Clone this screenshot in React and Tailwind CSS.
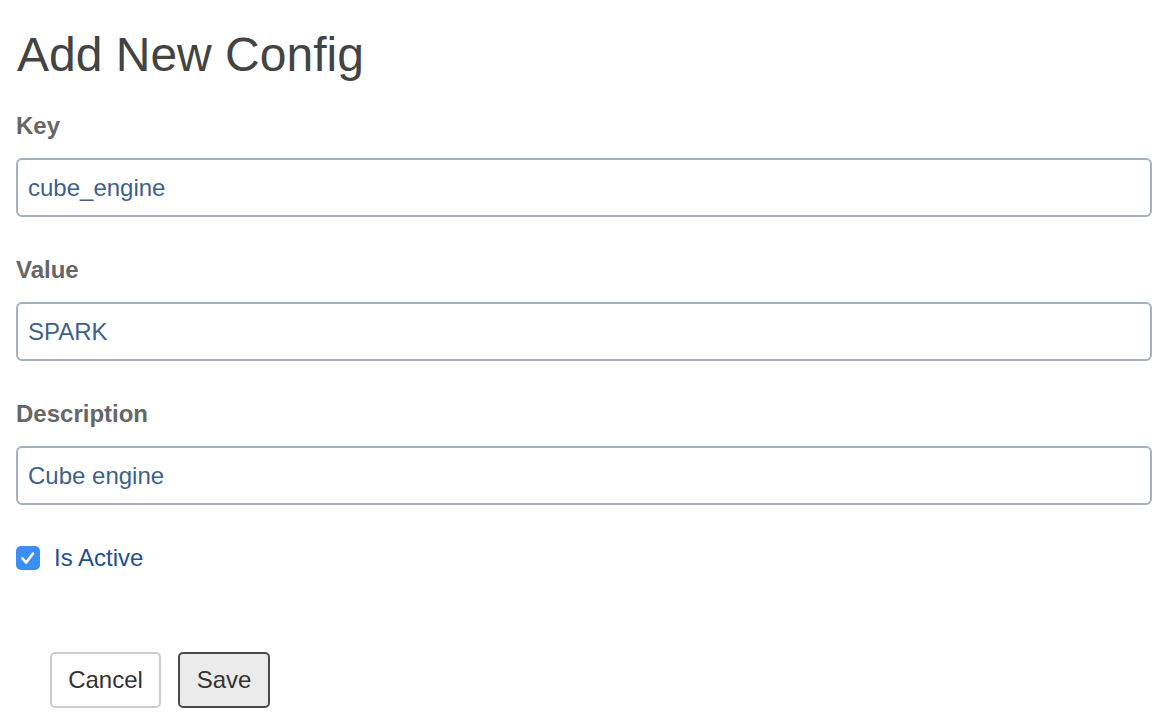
import React from "react";

function Field({ label, value }) {
  return (
    <div className="flex flex-col">
      <label className="text-[24px] leading-[28px] font-bold text-[#666666] -mt-[2px] mb-[2px]">{label}</label>
      <div className="mt-[16px] h-[59px] flex items-center rounded-[6px] border-2 border-[#a3b1c2] bg-white px-[10px]">
        <span className="text-[24px] leading-[28px] text-[#3d5f8c]">{value}</span>
      </div>
    </div>
  );
}

export default function App() {
  return (
    <div
      className="w-[1172px] h-[728px] bg-white pl-[16px] pr-[20px] pt-[28px]"
      style={{ fontFamily: '"Liberation Sans", Arial, Helvetica, sans-serif' }}
    >
      <h1 className="text-[48px] leading-[53px] text-[#434343] pl-[1px]">Add New Config</h1>
      <div className="mt-[33px] flex flex-col gap-[41px]">
        <Field label="Key" value="cube_engine" />
        <Field label="Value" value="SPARK" />
        <Field label="Description" value="Cube engine" />
      </div>
      <div className="mt-[41px] flex items-center h-[24px]">
        <span className="w-[24px] h-[24px] rounded-[5px] bg-[#3b8ef4] flex items-center justify-center">
          <svg width="20" height="20" viewBox="0 0 20 20" fill="none">
            <path d="M4.5 10.5 L8.2 14.5 L15 5.5" stroke="white" strokeWidth="2.6" strokeLinecap="round" strokeLinejoin="round" />
          </svg>
        </span>
        <span className="ml-[14px] text-[24px] leading-[28px] text-[#1f4f8f]">Is Active</span>
      </div>
      <div className="mt-[82px] ml-[34px] flex gap-[17px]">
        <button className="w-[111px] h-[56px] rounded-[5px] border-2 border-[#cccccc] bg-white text-[24px] text-[#333333]">
          Cancel
        </button>
        <button className="w-[92px] h-[56px] rounded-[5px] border-2 border-[#4a4a4a] bg-[#ebebeb] text-[24px] text-[#333333]">
          Save
        </button>
      </div>
    </div>
  );
}
